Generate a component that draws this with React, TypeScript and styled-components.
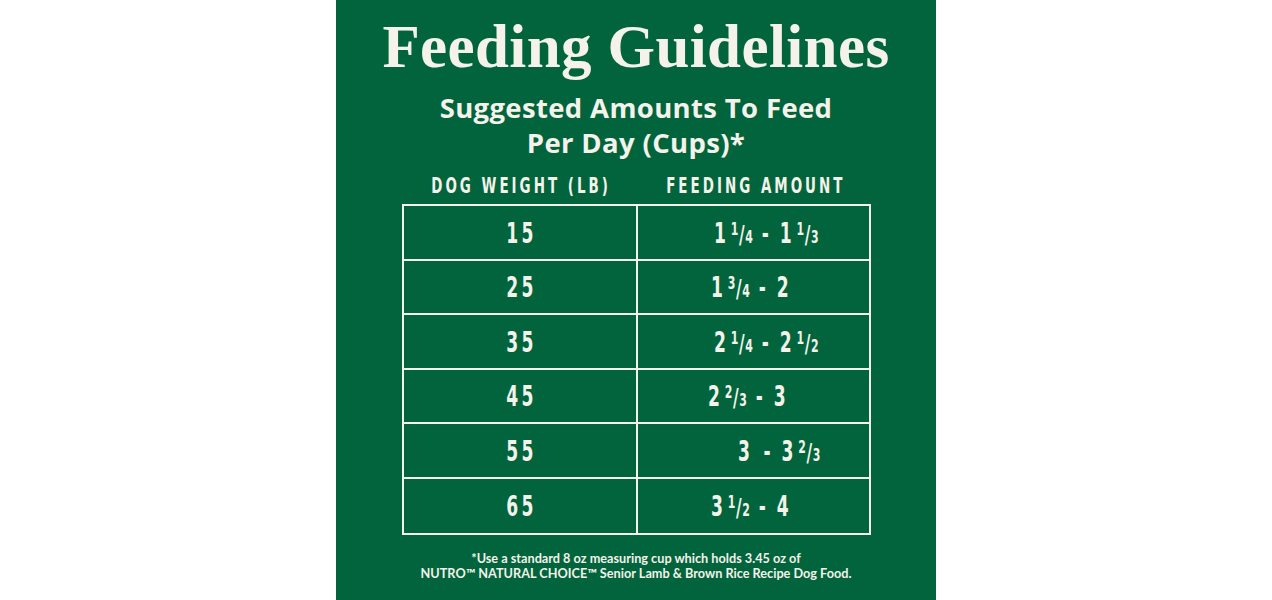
import React from "react";
import styled, { createGlobalStyle } from "styled-components";

const Global = createGlobalStyle`
  html, body { margin: 0; padding: 0; background: #ffffff; }
  * { box-sizing: border-box; }
`;

const CREAM = "#f4f2ea";
const GREEN = "#01643c";

const Page = styled.div`
  display: flex;
  justify-content: center;
  width: 100%;
`;

const Panel = styled.main`
  width: 600px;
  height: 600px;
  background: ${GREEN};
  color: ${CREAM};
  display: flex;
  flex-direction: column;
  align-items: center;
  padding-top: 14px;
`;

const Title = styled.h1`
  margin: 0;
  font-family: "Liberation Serif", "Times New Roman", serif;
  font-weight: 700;
  font-size: 61px;
  line-height: 66px;
  letter-spacing: 0.4px;
`;

const Subtitle = styled.h2`
  margin: 10px 0 0;
  font-family: "Open Sans", "Noto Sans", sans-serif;
  font-weight: 700;
  font-size: 27.5px;
  line-height: 35px;
  text-align: center;
  letter-spacing: 0.35px;
`;

const Columns = styled.div`
  width: 469px;
  display: grid;
  grid-template-columns: minmax(0, 1fr) minmax(0, 1fr);
`;

const HeaderRow = styled(Columns)`
  margin-top: 7px;
  height: 36px;
  align-items: center;
`;

const Condensed = styled.span`
  display: inline-block;
  font-family: "DejaVu Sans Condensed", "DejaVu Sans", sans-serif;
  font-weight: 700;
  transform: scaleX(0.68);
  white-space: nowrap;
`;

const HeadCell = styled.div`
  display: flex;
  justify-content: center;
`;

const HeadLabel = styled(Condensed)`
  font-size: 22px;
  letter-spacing: 4.4px;
  margin-right: -4.4px;
`;

const Table = styled(Columns)`
  margin-top: 1px;
  border: 2px solid ${CREAM};
`;

const Cell = styled.div<{ $right?: boolean; $last?: boolean }>`
  height: 54.5px;
  display: flex;
  align-items: center;
  justify-content: ${(p) => (p.$right ? "flex-start" : "center")};
  border-bottom: ${(p) => (p.$last ? "none" : `2px solid ${CREAM}`)};
  border-left: ${(p) => (p.$right ? `2px solid ${CREAM}` : "none")};
`;

const Weight = styled(Condensed)`
  font-size: 28px;
  letter-spacing: 5px;
  margin-left: 4px;
  padding-top: 2px;
`;

const Amount = styled(Condensed)<{ $indent: number }>`
  font-size: 28px;
  letter-spacing: 2px;
  transform-origin: left center;
  margin-left: ${(p) => p.$indent}px;
  padding-top: 2px;
`;

const Whole = styled.span`
  margin-right: 5px;
`;

const Num = styled.span`
  font-size: 0.64em;
  vertical-align: 0.42em;
  letter-spacing: 0;
`;

const Slash = styled.span`
  display: inline-block;
  font-size: 0.9em;
  letter-spacing: 0;
  margin: 0 1px;
`;

const Den = styled.span`
  font-size: 0.64em;
  letter-spacing: 0;
`;

const Dash = styled.span`
  display: inline-block;
  margin: 0 14px 0 13px;
`;

const Footnote = styled.p`
  margin: 16px 0 0;
  font-family: "Lato", "Noto Sans", sans-serif;
  font-weight: 700;
  font-size: 12.7px;
  line-height: 15px;
  text-align: center;
`;

type Part = { w: string; n?: string; d?: string };

const Value: React.FC<{ parts: Part[] }> = ({ parts }) => (
  <>
    {parts.map((p, i) => (
      <React.Fragment key={i}>
        {i > 0 && <Dash>-</Dash>}
        <Whole>{p.w}</Whole>
        {p.n && (
          <>
            <Num>{p.n}</Num>
            <Slash>/</Slash>
            <Den>{p.d}</Den>
          </>
        )}
      </React.Fragment>
    ))}
  </>
);

const rows: { weight: string; amount: Part[]; indent: number }[] = [
  { weight: "15", amount: [{ w: "1", n: "1", d: "4" }, { w: "1", n: "1", d: "3" }], indent: 76 },
  { weight: "25", amount: [{ w: "1", n: "3", d: "4" }, { w: "2" }], indent: 73 },
  { weight: "35", amount: [{ w: "2", n: "1", d: "4" }, { w: "2", n: "1", d: "2" }], indent: 76 },
  { weight: "45", amount: [{ w: "2", n: "2", d: "3" }, { w: "3" }], indent: 70 },
  { weight: "55", amount: [{ w: "3" }, { w: "3", n: "2", d: "3" }], indent: 100 },
  { weight: "65", amount: [{ w: "3", n: "1", d: "2" }, { w: "4" }], indent: 73 },
];

export default function App() {
  return (
    <Page>
      <Global />
      <Panel>
        <Title>Feeding Guidelines</Title>
        <Subtitle>
          Suggested Amounts To Feed
          <br />
          Per Day (Cups)*
        </Subtitle>
        <HeaderRow>
          <HeadCell>
            <HeadLabel>DOG WEIGHT (LB)</HeadLabel>
          </HeadCell>
          <HeadCell>
            <HeadLabel>FEEDING AMOUNT</HeadLabel>
          </HeadCell>
        </HeaderRow>
        <Table>
          {rows.map((r, i) => (
            <React.Fragment key={r.weight}>
              <Cell $last={i === rows.length - 1}>
                <Weight>{r.weight}</Weight>
              </Cell>
              <Cell $right $last={i === rows.length - 1}>
                <Amount $indent={r.indent}>
                  <Value parts={r.amount} />
                </Amount>
              </Cell>
            </React.Fragment>
          ))}
        </Table>
        <Footnote>
          *Use a standard 8 oz measuring cup which holds 3.45 oz of
          <br />
          NUTRO™ NATURAL CHOICE™ Senior Lamb &amp; Brown Rice Recipe Dog Food.
        </Footnote>
      </Panel>
    </Page>
  );
}
